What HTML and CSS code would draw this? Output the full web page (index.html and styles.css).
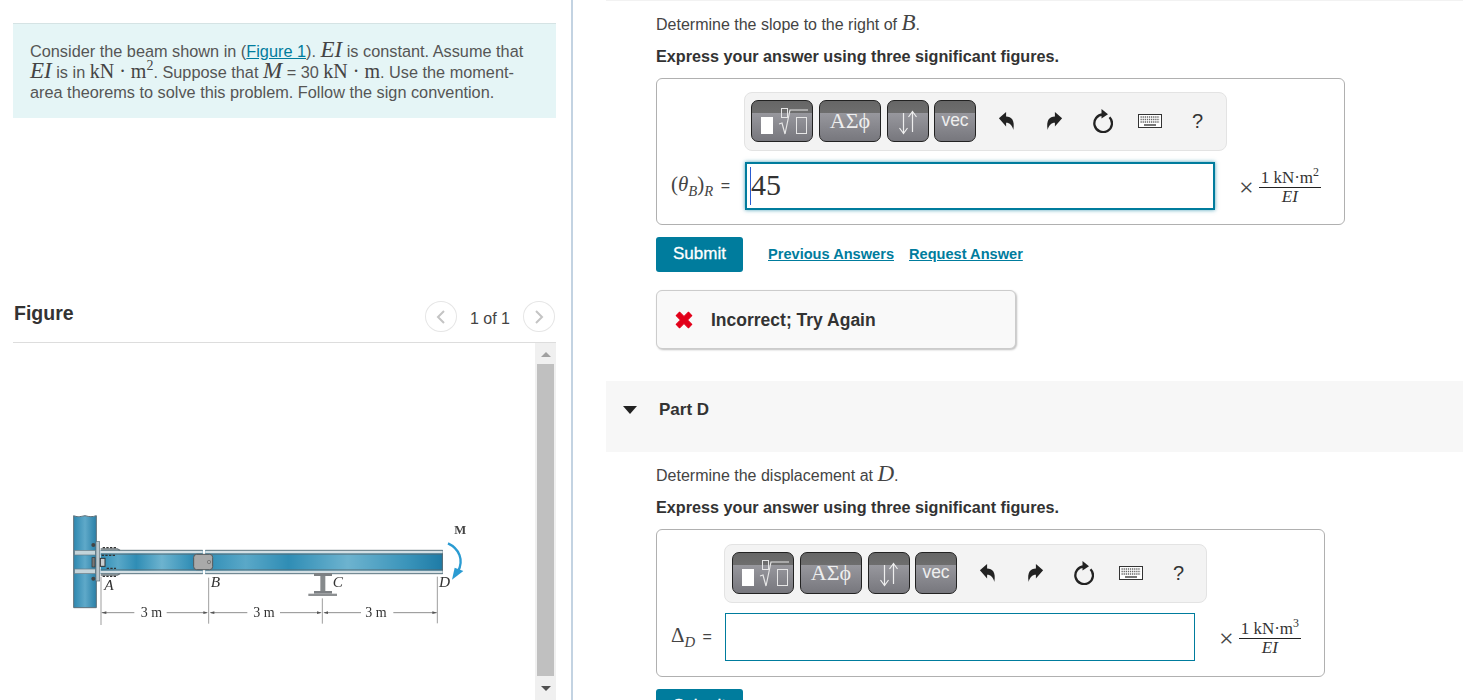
FILE: index.html
```html
<!DOCTYPE html>
<html lang="en">
<head>
<meta charset="utf-8">
<title>Beam problem</title>
<link rel="stylesheet" href="styles.css">
</head>
<body>
<svg class="defs" width="0" height="0">
  <defs>
    <symbol id="i-undo" viewBox="0 0 20 22"><path d="M1 8 9 1v5c6 0 10 4 8 15-1-5-4-8-8-8v4z"/></symbol>
    <symbol id="i-redo" viewBox="0 0 20 22"><path d="M19 8 11 1v5C5 6 1 10 3 21c1-5 4-8 8-8v4z"/></symbol>
    <symbol id="i-reset" viewBox="0 0 22 24"><path d="M12 5.500a8.800 8.800 0 1 0 6.500 2.700" fill="none" stroke="currentColor" stroke-width="2.300"/><path d="M10.500 0l6.500 5.200-6.500 4.300z"/></symbol>
    <symbol id="i-keys" viewBox="0 0 24 14"><rect x=".5" y=".5" width="23" height="13" fill="#fff" stroke="#333"/><path d="M2.500 3h19M2.500 5.500h19M2.500 8h19" stroke="#666" stroke-width="1.400" stroke-dasharray="1.300 .8" fill="none"/><path d="M6 11h12" stroke="#555" stroke-width="1.600"/></symbol>
    <symbol id="i-root" viewBox="0 0 62 42"><rect x="10" y="17" width="12" height="17" fill="#fff"/><rect x="30.500" y="8.500" width="6" height="9" fill="none" stroke="#e6e6e6"/><path d="M28 24l3-1 3 11 5-24h18" fill="none" stroke="#e6e6e6" stroke-width="1.200"/><rect x="45.500" y="17.500" width="10" height="16" fill="none" stroke="#e6e6e6"/></symbol>
    <symbol id="i-arrows" viewBox="0 0 42 42"><path d="M16.500 13v20M12.500 28l4 5.500 4-5.500M25.500 32V12M21.500 17l4-5.500 4 5.500" fill="none" stroke="#eee" stroke-width="1.200"/></symbol>
  </defs>
</svg>

<div class="page">
  <aside class="left">
    <section class="intro">
      <p>Consider the beam shown in (<a href="#">Figure 1</a>). <span class="mi big">EI</span> is constant. Assume that <span class="mi big">EI</span> is in <span class="mr">kN · m<sup>2</sup></span>. Suppose that <span class="mi big">M</span> = 30 <span class="mr">kN · m</span>. Use the moment-area theorems to solve this problem. Follow the sign convention.</p>
    </section>

    <header class="fig-head">
      <h2>Figure</h2>
      <div class="pager">
        <span class="circle"><svg width="12" height="16" viewBox="0 0 12 16"><path d="M9 2 3 8l6 6" fill="none" stroke="#c4c4c4" stroke-width="2"/></svg></span>
        <span class="count">1 of 1</span>
        <span class="circle"><svg width="12" height="16" viewBox="0 0 12 16"><path d="M3 2l6 6-6 6" fill="none" stroke="#c4c4c4" stroke-width="2"/></svg></span>
      </div>
    </header>

    <div class="fig-body">
      <div class="fig-view">
        <svg class="beam" width="420" height="130" viewBox="0 0 1260 390">
          <defs>
            <linearGradient id="web" x1="0" x2="1" y1="0" y2="0">
              <stop offset="0" stop-color="#2f8db5"/><stop offset=".17" stop-color="#5aa8c8"/><stop offset=".35" stop-color="#2f8db5"/><stop offset=".6" stop-color="#6db3cf"/><stop offset=".85" stop-color="#3a94ba"/><stop offset="1" stop-color="#1e7ba6"/>
            </linearGradient>
            <linearGradient id="col" x1="0" x2="1" y1="0" y2="0">
              <stop offset="0" stop-color="#2e88b0"/><stop offset=".5" stop-color="#5fa9c9"/><stop offset="1" stop-color="#2a80a8"/>
            </linearGradient>
          </defs>
          <path d="M41 32c10 4 16 4 34 0 14 4 22 4 34 0v276H41z" fill="url(#col)" stroke="#5f6f78" stroke-width="3"/>
          <rect x="44" y="136" width="62" height="14" fill="#c4d4da" stroke="#6b7a82" stroke-width="2"/>
          <rect x="44" y="192" width="62" height="14" fill="#c4d4da" stroke="#6b7a82" stroke-width="2"/>
          <rect x="108" y="110" width="11" height="118" fill="#bcc8ce" stroke="#5f6f78" stroke-width="2"/>
          <rect x="122" y="135" width="306" height="72" fill="url(#web)"/>
          <rect x="436" y="135" width="712" height="72" fill="url(#web)"/>
          <path d="M122 136h306M122 147h306M122 195h306M122 206h306M436 136h712M436 147h712M436 195h712M436 206h712M1147 136v70" stroke="#55646c" stroke-width="3" fill="none"/>
          <path d="M122 141h306M122 201h306M436 141h712M436 201h712" stroke="#d3dfe4" stroke-width="7" fill="none"/>
          <path d="M122 132h50l8 4M122 210h50l8-4" stroke="#6a757b" stroke-width="4" fill="none"/>
          <path d="M128 128h40M128 214h40M125 151h42M140 190h28" stroke="#333" stroke-width="4" stroke-dasharray="7 4" fill="none"/>
          <circle cx="100" cy="120" r="6" fill="#444"/><circle cx="100" cy="221" r="6" fill="#444"/>
          <rect x="96" y="158" width="9" height="28" fill="#777" stroke="#333" stroke-width="2"/>
          <rect x="121" y="160" width="14" height="24" fill="#c9cfd1" stroke="#333" stroke-width="3"/>
          <rect x="401" y="148" width="57" height="46" rx="9" fill="#a9a9a9" stroke="#55585a" stroke-width="3"/>
          <circle cx="447" cy="171" r="5" fill="none" stroke="#666" stroke-width="2"/>
          <rect x="762" y="204" width="54" height="9" fill="#7c8083"/>
          <rect x="781" y="213" width="15" height="48" fill="#868a8c"/>
          <rect x="762" y="258" width="54" height="8" fill="#7c8083"/>
          <rect x="745" y="266" width="86" height="7" fill="#8d9092"/>
          <path d="M123 215v145M446 218v138M787 280v76M1132 215v140" stroke="#8a8a8a" stroke-width="2.500" fill="none"/>
          <path d="M125 323h98M320 323h120M452 323h110M660 323h122M793 323h110M1000 323h130" stroke="#777" stroke-width="2.500" fill="none"/>
          <path d="M125 323l14-4v8zM444 323l-14-4v8zM449 323l14-4v8zM785 323l-14-4v8zM790 323l14-4v8zM1131 323l-14-4v8z" fill="#555"/>
          <g class="dim"><text x="274" y="337">3 m</text><text x="612" y="337">3 m</text><text x="948" y="337">3 m</text></g>
          <g class="pt"><text x="133" y="254">A</text><text x="452" y="245">B</text><text x="818" y="245">C</text><text x="1137" y="245">D</text></g>
          <text class="mm" x="1183" y="88">M</text>
          <path d="M1164 115c34 16 48 50 30 84" fill="none" stroke="#2a9bd2" stroke-width="7"/>
          <path d="M1176 224l8-36 26 10z" fill="#2a9bd2"/>
        </svg>
      </div>
      <div class="scroll">
        <span class="arrow up"></span>
        <span class="thumb"></span>
        <span class="arrow down"></span>
      </div>
    </div>
  </aside>

  <main class="right">
    <div class="topline"></div>
    <p class="q">Determine the slope to the right of <span class="mi big">B</span>.</p>
    <p class="hint">Express your answer using three significant figures.</p>

    <div class="answer">
      <div class="toolbar">
        <span class="btn w62"><svg width="62" height="42"><use href="#i-root"/></svg></span>
        <span class="btn w62 greek">ΑΣϕ</span>
        <span class="btn w42"><svg width="42" height="42"><use href="#i-arrows"/></svg></span>
        <span class="btn w42 vec">vec</span>
        <span class="tools">
          <svg class="ico" width="18" height="20"><use href="#i-undo"/></svg>
          <svg class="ico" width="18" height="20"><use href="#i-redo"/></svg>
          <svg class="ico" width="22" height="24"><use href="#i-reset"/></svg>
          <svg class="ico" width="24" height="14"><use href="#i-keys"/></svg>
          <span class="help">?</span>
        </span>
      </div>
      <div class="label"><span class="mr">(<i>θ<sub>B</sub></i>)<i><sub>R</sub></i></span> =</div>
      <div class="input focus"><span class="caret"></span>45</div>
      <div class="units">
        <span class="times">×</span>
        <span class="frac"><span class="num">1 kN·m<sup>2</sup></span><span class="den">EI</span></span>
      </div>
    </div>

    <div class="actions">
      <a class="submit" href="#">Submit</a>
      <a class="link" href="#">Previous Answers</a>
      <a class="link" href="#">Request Answer</a>
    </div>

    <div class="feedback">
      <svg width="20" height="20" viewBox="0 0 18 18"><path d="M2 5l3-3 4 4 4-4 3 3-4 4 4 4-3 3-4-4-4 4-3-3 4-4z" fill="#e2001a" stroke="#e2001a" stroke-linejoin="round"/></svg>
      <span>Incorrect; Try Again</span>
    </div>

    <div class="part"><span class="tri"></span><h3>Part D</h3></div>

    <p class="q second">Determine the displacement at <span class="mi big">D</span>.</p>
    <p class="hint">Express your answer using three significant figures.</p>

    <div class="answer short">
      <div class="toolbar">
        <span class="btn w62"><svg width="62" height="42"><use href="#i-root"/></svg></span>
        <span class="btn w62 greek">ΑΣϕ</span>
        <span class="btn w42"><svg width="42" height="42"><use href="#i-arrows"/></svg></span>
        <span class="btn w42 vec">vec</span>
        <span class="tools">
          <svg class="ico" width="18" height="20"><use href="#i-undo"/></svg>
          <svg class="ico" width="18" height="20"><use href="#i-redo"/></svg>
          <svg class="ico" width="22" height="24"><use href="#i-reset"/></svg>
          <svg class="ico" width="24" height="14"><use href="#i-keys"/></svg>
          <span class="help">?</span>
        </span>
      </div>
      <div class="label"><span class="mr">Δ<i><sub>D</sub></i></span> =</div>
      <div class="input"></div>
      <div class="units">
        <span class="times">×</span>
        <span class="frac"><span class="num">1 kN·m<sup>3</sup></span><span class="den">EI</span></span>
      </div>
    </div>

    <div class="actions">
      <a class="submit" href="#">Submit</a>
      <a class="link" href="#">Request Answer</a>
    </div>
  </main>
</div>
</body>
</html>
```
FILE: styles.css
```css
* { box-sizing: border-box; }
html, body { margin: 0; height: 700px; overflow: hidden; background: #fff; }
body { font: 16px/20px "Liberation Sans", Arial, sans-serif; color: #333; }
p, h2, h3 { margin: 0; }
.defs { display: block; height: 0; }
.page { display: flex; height: 700px; overflow: hidden; }

.mi { font-family: "Liberation Serif", serif; font-style: italic; line-height: 0; }
.mr { font-family: "Liberation Serif", serif; line-height: 0; }
.big { font-size: 23px; }
.mr sup, .num sup { font-size: 70%; line-height: 0; }
.mr sub { font-size: 70%; line-height: 0; }

/* left column */
.left { width: 573px; flex: none; border-right: 2px solid #c3d3e2; padding: 23px 16px 0 13px; display: flex; flex-direction: column; }
.intro { width: 543px; height: 95px; flex: none; background: #e5f5f6; border-top: 1px solid #d5e3e4; padding: 17px 17px 0; color: #555; font-size: 16.300px; line-height: 20.500px; }
.intro .mr { font-size: 20px; color: #444; }
.intro .mi { color: #444; }
.intro a { color: #007c9d; }
.fig-head { width: 543px; height: 225px; flex: none; border-bottom: 1px solid #ddd; display: flex; justify-content: space-between; align-items: flex-end; }
.fig-head h2 { font-size: 19.500px; line-height: 24px; color: #333; margin: 0 0 17px 1px; }
.pager { display: flex; align-items: center; gap: 13px; margin-bottom: 10px; margin-right: 1px; }
.circle { width: 32px; height: 31px; border: 1px solid #e6e6e6; border-radius: 50%; display: flex; align-items: center; justify-content: center; }
.count { color: #444; margin-top: 4px; }
.fig-body { width: 543px; flex: 1; display: flex; min-height: 0; }
.fig-view { flex: 1; padding: 162px 0 0 47px; }
.beam { display: block; filter: blur(.5px); }
.beam text { font-family: "Liberation Serif", serif; }
.dim text { font-size: 42px; text-anchor: middle; fill: #333; }
.pt text { font-size: 46px; font-style: italic; fill: #333; }
.mm { font-size: 38px; font-weight: bold; fill: #444; }
.scroll { width: 21px; height: 357px; background: #f0f0f0; display: flex; flex-direction: column; align-items: center; }
.thumb { width: 17px; height: 312px; background: #c0c0c0; margin: 0 1px 0 0; }
.arrow { width: 0; height: 0; border-left: 5px solid transparent; border-right: 5px solid transparent; }
.arrow.up { border-bottom: 5px solid #a0a0a0; margin: 9px 0 7px; }
.arrow.down { border-top: 5px solid #505050; margin-top: 10px; }

/* right column */
.right { flex: 1; min-width: 0; padding: 0 0 0 83px; }
.topline { height: 1px; margin: 0 0 13px -50px; background: #f2f2f2; }
.q { height: 20px; line-height: 22px; color: #444; }
.hint { font-weight: bold; font-size: 16.200px; margin-top: 12px; color: #333; }
.answer { width: 689px; margin-top: 12px; border: 1px solid #b0b0b0; border-radius: 6px; padding: 13px 14px 14px; display: grid; grid-template-columns: 74px 470px auto; row-gap: 11px; align-items: center; }
.answer.short { width: 669px; padding: 14px 14px 15px; row-gap: 10px; grid-template-columns: 54px 470px auto; }
.toolbar { grid-column: 2 / 4; justify-self: start; width: 483px; height: 59px; margin-left: -1px; background: #f3f3f3; border: 1px solid #e3e3e3; border-radius: 8px; padding: 7px 6px; display: flex; align-items: flex-start; gap: 6px; }
.short .toolbar { padding-left: 7px; }
.btn { height: 42px; flex: none; border: 1px solid #222; border-radius: 7px; background: linear-gradient(#666 0, #6e6e6e 31%, #97979d 31%, #77777d 100%); color: #eee; display: flex; align-items: center; justify-content: center; overflow: hidden; }
.btn svg { flex: none; }
.w62 { width: 62px; }
.w42 { width: 42px; }
.greek { font: 22px "Liberation Serif", serif; }
.vec { font-size: 17.500px; padding-bottom: 2px; margin-left: -1px; }
.tools { flex: 1; display: flex; align-items: center; height: 42px; padding-left: 16px; }
.ico { color: #222; flex: none; fill: currentColor; }
.tools .ico:nth-child(1) { margin-right: 29px; }
.tools .ico:nth-child(2) { margin-right: 28px; }
.tools .ico:nth-child(3) { margin-right: 25px; }
.tools .ico:nth-child(4) { margin-right: 30px; }
.help { font-size: 20px; color: #333; }
.label { font-size: 16px; color: #444; white-space: nowrap; }
.label .mr { font-size: 21px; margin-right: 3px; }
.input { height: 48px; border: 1px solid #007c9d; background: #fff; font: 30px/46px "Liberation Serif", serif; color: #333; padding: 0 0 3px 4px; display: flex; align-items: center; position: relative; }
.input.focus { border-width: 2px; box-shadow: 0 0 4px rgba(0,124,157,.7); }
.caret { position: absolute; left: 3px; top: 3px; width: 1px; height: 38px; background: #2a5bd0; }
.units { display: flex; align-items: center; padding: 3px 0 0 24px; font-family: "Liberation Serif", serif; color: #333; }
.times { font-size: 26px; margin-right: 5px; color: #444; }
.frac { display: inline-flex; flex-direction: column; align-items: center; font-size: 17px; line-height: 18px; }
.num { border-bottom: 1px solid #222; padding: 0 2px; white-space: nowrap; }
.den { font-style: italic; }
.actions { margin-top: 12px; height: 35px; display: flex; align-items: center; gap: 15px; }
.submit { width: 87px; height: 35px; background: #007c9d; color: #fff; border-radius: 3px; text-decoration: none; text-align: center; line-height: 33px; font-size: 17px; margin-right: 10px; -webkit-text-stroke: .3px #fff; }
.link { color: #007c9d; font-weight: bold; font-size: 14.600px; margin-bottom: 2px; }
.feedback { width: 360px; height: 59px; margin-top: 18px; background: #f9f9f9; border: 1px solid #ccc; border-radius: 6px; box-shadow: 1px 1px 2px rgba(0,0,0,.25); display: flex; align-items: center; padding-left: 17px; gap: 17px; font-weight: bold; font-size: 17.500px; color: #333; }
.part { height: 71px; margin: 32px 0 0 -50px; background: #f7f7f7; display: flex; align-items: center; padding: 0 0 14px 17px; }
.part h3 { font-size: 17px; margin-left: 22px; color: #333; }
.tri { width: 0; height: 0; border-left: 7px solid transparent; border-right: 7px solid transparent; border-top: 8px solid #222; }
.q.second { margin-top: 13px; }
```
